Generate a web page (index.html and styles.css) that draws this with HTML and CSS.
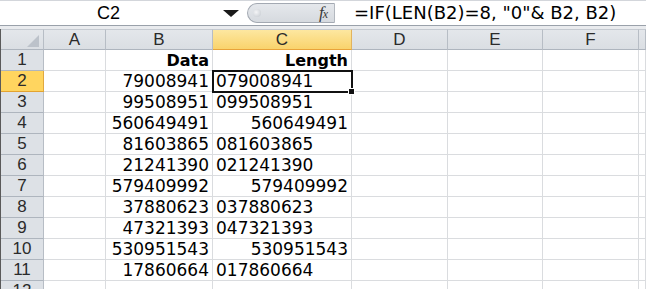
FILE: index.html
```html
<!DOCTYPE html>
<html lang="en">

<head>
    <meta charset="UTF-8">
    <title>Book1 - C2</title>
    <link rel="stylesheet" href="styles.css">
</head>

<body>
    <div class="formula-bar">
        <div class="name-box">C2</div>
        <div class="name-drop"><span class="tri"></span></div>
        <div class="fx-pill">
            <span class="knob"></span>
            <span class="fx">f<sub>x</sub></span>
        </div>
        <div class="formula">=IF(LEN(B2)=8, "0"&amp; B2, B2)</div>
    </div>
    <div class="strip"></div>

    <div class="sheet">
        <!-- column headers -->
        <div class="hd corner"><span class="corner-tri"></span></div>
        <div class="hd">A</div>
        <div class="hd">B</div>
        <div class="hd hd-sel">C</div>
        <div class="hd">D</div>
        <div class="hd">E</div>
        <div class="hd">F</div>
        <div class="hd"></div>

        <div class="rh">1</div>
        <div class="cell"></div>
        <div class="cell num b">Data</div>
        <div class="cell num b">Length</div>
        <div class="cell"></div><div class="cell"></div><div class="cell"></div><div class="cell"></div>

        <div class="rh rh-sel">2</div>
        <div class="cell"></div>
        <div class="cell num">79008941</div>
        <div class="cell txt active">079008941<span class="handle"></span></div>
        <div class="cell"></div><div class="cell"></div><div class="cell"></div><div class="cell"></div>

        <div class="rh">3</div>
        <div class="cell"></div>
        <div class="cell num">99508951</div>
        <div class="cell txt">099508951</div>
        <div class="cell"></div><div class="cell"></div><div class="cell"></div><div class="cell"></div>

        <div class="rh">4</div>
        <div class="cell"></div>
        <div class="cell num">560649491</div>
        <div class="cell num">560649491</div>
        <div class="cell"></div><div class="cell"></div><div class="cell"></div><div class="cell"></div>

        <div class="rh">5</div>
        <div class="cell"></div>
        <div class="cell num">81603865</div>
        <div class="cell txt">081603865</div>
        <div class="cell"></div><div class="cell"></div><div class="cell"></div><div class="cell"></div>

        <div class="rh">6</div>
        <div class="cell"></div>
        <div class="cell num">21241390</div>
        <div class="cell txt">021241390</div>
        <div class="cell"></div><div class="cell"></div><div class="cell"></div><div class="cell"></div>

        <div class="rh">7</div>
        <div class="cell"></div>
        <div class="cell num">579409992</div>
        <div class="cell num">579409992</div>
        <div class="cell"></div><div class="cell"></div><div class="cell"></div><div class="cell"></div>

        <div class="rh">8</div>
        <div class="cell"></div>
        <div class="cell num">37880623</div>
        <div class="cell txt">037880623</div>
        <div class="cell"></div><div class="cell"></div><div class="cell"></div><div class="cell"></div>

        <div class="rh">9</div>
        <div class="cell"></div>
        <div class="cell num">47321393</div>
        <div class="cell txt">047321393</div>
        <div class="cell"></div><div class="cell"></div><div class="cell"></div><div class="cell"></div>

        <div class="rh">10</div>
        <div class="cell"></div>
        <div class="cell num">530951543</div>
        <div class="cell num">530951543</div>
        <div class="cell"></div><div class="cell"></div><div class="cell"></div><div class="cell"></div>

        <div class="rh">11</div>
        <div class="cell"></div>
        <div class="cell num">17860664</div>
        <div class="cell txt">017860664</div>
        <div class="cell"></div><div class="cell"></div><div class="cell"></div><div class="cell"></div>

        <div class="rh">12</div>
        <div class="cell"></div><div class="cell"></div><div class="cell"></div>
        <div class="cell"></div><div class="cell"></div><div class="cell"></div><div class="cell"></div>
    </div>
</body>

</html>
```

FILE: styles.css
```css
html,
body {
    margin: 0;
    padding: 0;
    background-color: #fff;
    overflow: hidden;
}

body {
    width: 646px;
    height: 289px;
}

/* formula bar */
.formula-bar {
    display: flex;
    height: 24px;
    border-top: 1px solid #d3d6db;
    border-bottom: 1px solid #9aa1aa;
    background-color: #fff;
}

.name-box {
    width: 217px;
    font-family: "Liberation Sans", Arial, sans-serif;
    font-size: 18px;
    line-height: 24px;
    text-align: center;
    color: #000;
}

.name-drop {
    width: 30px;
    display: flex;
    align-items: center;
    justify-content: center;
}

.tri {
    width: 0;
    height: 0;
    margin-left: -2px;
    border-left: 8px solid transparent;
    border-right: 8px solid transparent;
    border-top: 7px solid #1a1a1a;
}

.fx-pill {
    position: relative;
    width: 88px;
    margin-top: 2px;
    height: 20px;
    box-sizing: border-box;
    border: 1px solid #a3a9b2;
    border-right: 1px solid #b3b8bf;
    border-radius: 11px 0 0 11px;
    background: linear-gradient(#e5e8ec, #d6dadf);
    display: flex;
    align-items: center;
    justify-content: flex-end;
}

.knob {
    position: absolute;
    left: 5px;
    top: 5px;
    width: 8px;
    height: 8px;
    border-radius: 50%;
    background: radial-gradient(circle at 40% 40%, #f4f5f7, #c3c8ce);
}

.fx {
    font-family: "Liberation Serif", "Times New Roman", serif;
    font-style: italic;
    font-size: 17px;
    color: #3a3a3a;
    margin-right: 6px;
    line-height: 18px;
}

.fx sub {
    font-size: 12px;
    vertical-align: 0;
    margin-left: -1px;
}

.formula {
    flex: 1;
    padding-left: 19px;
    font-family: "DejaVu Sans", Verdana, sans-serif;
    font-size: 18px;
    line-height: 24px;
    color: #000;
    white-space: nowrap;
}

.strip {
    height: 3px;
    background-color: #e9ebee;
}

/* grid */
.sheet {
    display: grid;
    grid-template-columns: 43px 62px 107px 139px 96px 95px 96px 1fr;
    grid-auto-rows: 21px;
    border-left: 1px solid #5a5a5a;
    width: 645px;
}

.hd,
.rh {
    box-sizing: border-box;
    background: linear-gradient(#e4e7eb, #dadee3);
    border-right: 1px solid #b7bdc5;
    border-bottom: 1px solid #aeb5be;
    font-family: "Liberation Sans", Arial, sans-serif;
    font-size: 17px;
    line-height: 20px;
    text-align: center;
    color: #2b2b2b;
}

.hd {
    border-top: 1px solid #c5cad1;
    line-height: 19px;
}

.rh {
    background: #dde1e6;
}

.hd-sel {
    background: linear-gradient(#fde7a0, #f9d36c);
    border-bottom: 1px solid #e8a33a;
    border-right: 1px solid #e2b35e;
}

.rh-sel {
    background: #ffd55f;
    border-bottom: 1px solid #e3a330;
    border-right: 1px solid #e0a83f;
}

.corner {
    position: relative;
}

.corner-tri {
    position: absolute;
    right: 4px;
    bottom: 2px;
    width: 0;
    height: 0;
    border-left: 12px solid transparent;
    border-bottom: 12px solid #bcc2ca;
}

.cell {
    position: relative;
    box-sizing: border-box;
    border-right: 1px solid #dadcdf;
    border-bottom: 1px solid #dadcdf;
    font-family: "DejaVu Sans", Verdana, sans-serif;
    font-size: 17px;
    line-height: 21px;
    color: #000;
    white-space: nowrap;
    padding: 0 3px;
}

.num {
    text-align: right;
}

.txt {
    text-align: left;
}

.b {
    font-weight: bold;
    font-size: 16px;
}

.active {
    outline: 2px solid #111;
    outline-offset: -1px;
    z-index: 1;
}

.handle {
    position: absolute;
    right: -4px;
    bottom: -4px;
    width: 5px;
    height: 5px;
    background-color: #111;
    border: 1px solid #fff;
}
```
